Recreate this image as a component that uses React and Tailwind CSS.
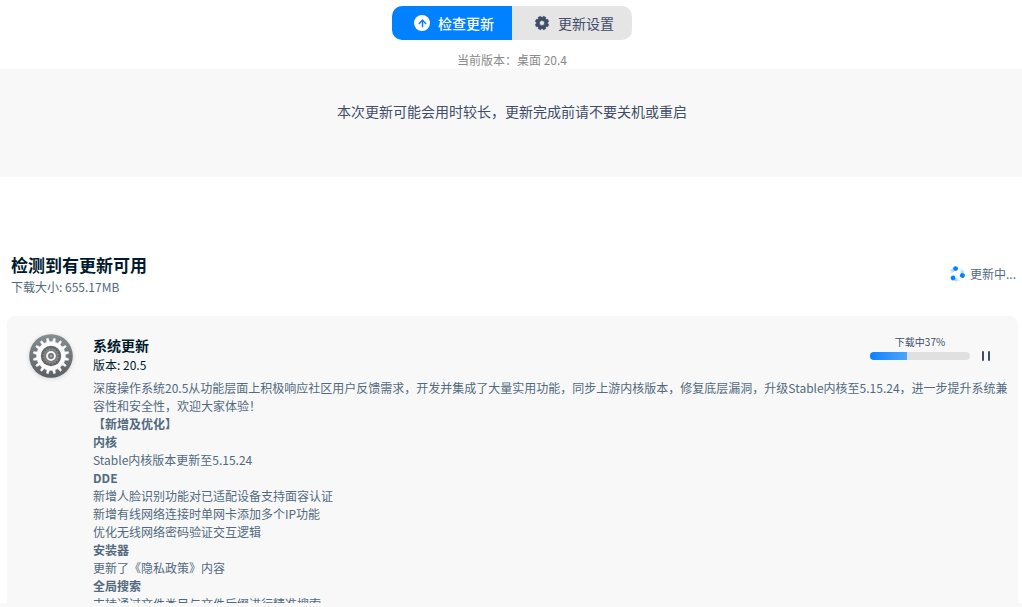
import { ArrowUp } from 'lucide-react';

const PROGRESS = 37;

const CHANGELOG = [
  { title: '【新增及优化】', items: [] },
  { title: '内核', items: ['Stable内核版本更新至5.15.24'] },
  {
    title: 'DDE',
    items: [
      '新增人脸识别功能对已适配设备支持面容认证',
      '新增有线网络连接时单网卡添加多个IP功能',
      '优化无线网络密码验证交互逻辑',
    ],
  },
  { title: '安装器', items: ['更新了《隐私政策》内容'] },
  { title: '全局搜索', items: ['支持通过文件类目与文件后缀进行精准搜索'] },
];

// closed outline of a cog centred on (c, c); tip and root are half-widths in teeth
function cogPath(c, teeth, outer, inner, tip = 0.12, root = 0.22) {
  const step = (Math.PI * 2) / teeth;
  const points = [];
  for (let i = 0; i < teeth; i++) {
    [[-root, inner], [-tip, outer], [tip, outer], [root, inner]].forEach(([offset, r]) => {
      const a = (i + 0.5 + offset) * step - Math.PI / 2;
      points.push(`${(c + r * Math.cos(a)).toFixed(2)} ${(c + r * Math.sin(a)).toFixed(2)}`);
    });
  }
  return `M${points.join('L')}Z`;
}

function SystemIcon() {
  return (
    <svg viewBox="0 0 44 44" className="size-11 shrink-0 drop-shadow-sm" aria-hidden="true">
      <defs>
        <linearGradient id="disc" x1="0" y1="0" x2="0" y2="1">
          <stop offset="0" stopColor="#868e92" />
          <stop offset="1" stopColor="#5a5f63" />
        </linearGradient>
      </defs>
      <circle cx="22" cy="22" r="21.8" fill="url(#disc)" />
      <path d={cogPath(22, 16, 17.8, 14.4)} fill="#fbfbfb" stroke="#fbfbfb" strokeWidth="0.6" strokeLinejoin="round" />
      <circle cx="22" cy="22" r="10.2" fill="#63696d" />
      <path d={cogPath(22, 16, 8.4, 7)} fill="#8a8987" />
      <circle cx="22" cy="22" r="6" fill="#74777a" />
      <circle cx="22" cy="22" r="3.9" fill="#6a6e71" stroke="#f6f6f6" strokeWidth="2" />
      <circle cx="22" cy="22" r="1.5" fill="#a4a7a9" />
    </svg>
  );
}

function SettingsIcon() {
  return (
    <svg viewBox="0 0 16 16" className="size-4" aria-hidden="true">
      <path
        d={`${cogPath(8, 8, 6.8, 5.7, 0.24, 0.36)}M10.6 8a2.6 2.6 0 1 0-5.2 0a2.6 2.6 0 1 0 5.2 0Z`}
        fill="#414d68"
        fillRule="evenodd"
        stroke="#414d68"
        strokeWidth="0.7"
        strokeLinejoin="round"
      />
    </svg>
  );
}

function LoadingIcon() {
  return (
    <svg viewBox="0 0 16 16" className="size-4" aria-hidden="true">
      {[0, 120, 240].map((angle) => (
        <g key={angle} transform={`rotate(${angle} 8 8)`}>
          <path d="M6.2 2.6A5.7 5.7 0 0 0 3 5.4" fill="none" stroke="#0081ff" strokeOpacity="0.2" strokeWidth="3.6" />
          <path d="M4.6 3.4A5.7 5.7 0 0 0 2.3 7.4" fill="none" stroke="#0081ff" strokeOpacity="0.12" strokeWidth="3.4" />
          <circle cx="6.6" cy="2.6" r="2.4" fill="#0081ff" />
        </g>
      ))}
    </svg>
  );
}

export default function App() {
  return (
    <div className="h-screen overflow-hidden bg-[#f8f8f8] pb-1 font-['Noto_Sans_CJK_SC',sans-serif] text-xs text-[#526a7f]">
      <main className="flex h-full flex-col overflow-hidden bg-white">
        <nav className="flex shrink-0 justify-center pt-1.5 pl-0.5">
          <button type="button" className="flex h-[34px] w-30 items-center justify-center gap-2 rounded-l-[10px] bg-[#0081ff] pl-1 text-sm font-medium text-white">
            <span className="flex size-4 items-center justify-center rounded-full bg-white text-[#0081ff]">
              <ArrowUp size={11} strokeWidth={3.2} />
            </span>
            检查更新
          </button>
          <button type="button" className="flex h-[34px] w-30 items-center justify-center gap-2 rounded-r-[10px] bg-[#e5e5e5] pl-1 text-sm text-[#414d68]">
            <SettingsIcon />
            更新设置
          </button>
        </nav>
        <p className="mt-[11px] shrink-0 pl-0.5 text-center leading-[18px] text-[#8a8a8a]">当前版本：桌面 20.4</p>

        <section className="h-27 shrink-0 bg-[#f8f8f8] pt-8 pl-0.5 text-center text-sm text-[#414d68]">
          本次更新可能会用时较长，更新完成前请不要关机或重启
        </section>

        <header className="mt-19 flex shrink-0 items-center justify-between pr-1.5 pl-[11px]">
          <div>
            <h1 className="text-[17px] leading-6 font-bold text-[#001a2e]">检测到有更新可用</h1>
            <p className="leading-5">下载大小: 655.17MB</p>
          </div>
          <div className="flex items-center gap-[5px] pb-0.5">
            <LoadingIcon />
            更新中...
          </div>
        </header>

        <article className="mt-[19px] mr-1 ml-[7px] flex min-h-0 flex-1 items-start gap-5 rounded-t-lg bg-[#f8f8f8] pt-[18px] pr-2 pl-[22px]">
          <SystemIcon />
          <div className="min-w-0 flex-1">
            <div className="flex justify-between pr-5">
              <div className="text-[#001a2e]">
                <h2 className="text-sm leading-[22px] font-bold">系统更新</h2>
                <p className="leading-[18px]">版本: 20.5</p>
              </div>
              <div className="flex items-end gap-3 pb-[15px]">
                <div className="flex w-25 flex-col items-center pb-px">
                  <span className="mb-0.5 text-[10px] leading-4 text-[#414d68]">下载中{PROGRESS}%</span>
                  <div className="h-2 w-full overflow-hidden rounded-full bg-[#e0e0e0]">
                    <div className="h-full bg-linear-to-r from-[#0081ff] to-[#4aa5ff]" style={{ width: `${PROGRESS}%` }} />
                  </div>
                </div>
                <button type="button" aria-label="暂停" className="flex gap-1">
                  <span className="h-2.5 w-0.5 rounded-full bg-[#414d68]" />
                  <span className="h-2.5 w-0.5 rounded-full bg-[#414d68]" />
                </button>
              </div>
            </div>

            <div className="mt-[3px] leading-[18px]">
              <p>
                深度操作系统20.5从功能层面上积极响应社区用户反馈需求，开发并集成了大量实用功能，同步上游内核版本，修复底层漏洞，升级Stable内核至5.15.24，进一步提升系统兼容性和安全性，欢迎大家体验！
              </p>
              {CHANGELOG.map((group) => (
                <div key={group.title}>
                  <h3 className="font-bold">{group.title}</h3>
                  {group.items.map((item) => (
                    <p key={item}>{item}</p>
                  ))}
                </div>
              ))}
            </div>
          </div>
        </article>
      </main>
    </div>
  );
}
